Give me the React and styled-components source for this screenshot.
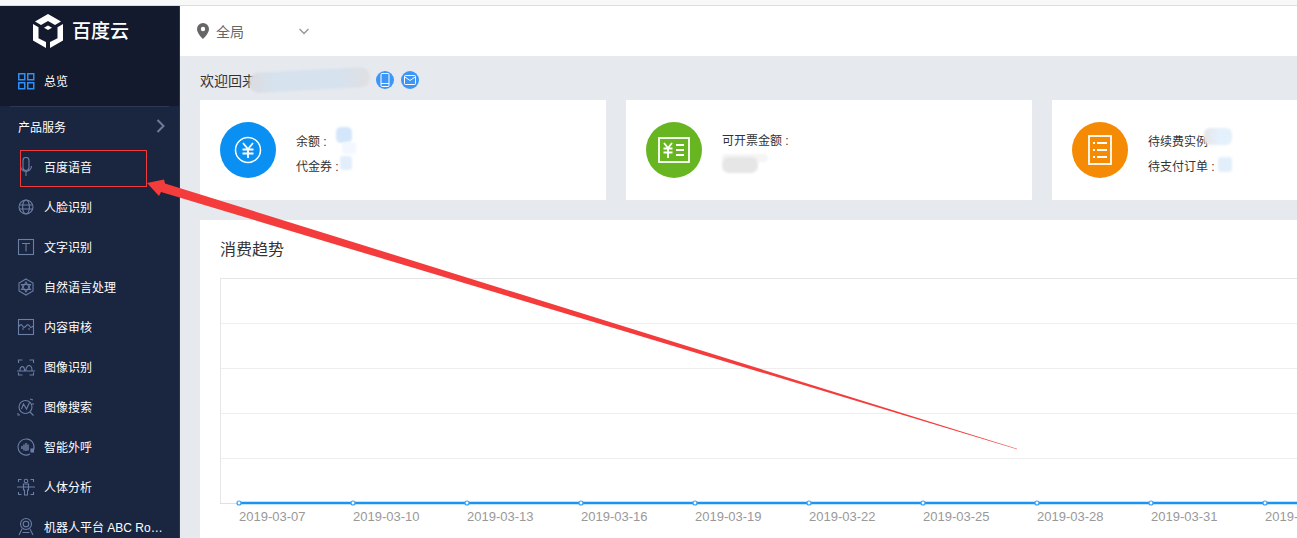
import React from 'react'
import styled, { createGlobalStyle } from 'styled-components'

const GlobalStyle = createGlobalStyle`
  html, body {
    margin: 0;
    height: 100%;
    overflow: hidden;
    background: #fff;
    font-family: "Liberation Sans", "Noto Sans CJK SC", sans-serif;
  }
  * { box-sizing: border-box; }
`

const Page = styled.div`
  position: relative;
  width: 1297px;
  height: 538px;
  overflow: hidden;
  display: flex;
  flex-direction: column;
`
const TopStrip = styled.div`
  height: 6px;
  flex: none;
  background: #f8f8f8;
  border-bottom: 1px solid #dcdcdc;
`
const Body = styled.div`
  flex: 1;
  min-height: 0;
  display: flex;
`
const Sidebar = styled.aside`
  width: 180px;
  flex: none;
  background: #1a2540;
  border-right: 1px solid #2b344d;
`
const SideTop = styled.div`
  height: 100px;
  background: #141a2e;
`
const Logo = styled.div`
  height: 50px;
  margin-bottom: 5px;
  display: flex;
  align-items: center;
  gap: 9px;
  padding-left: 33px;
  color: #fff;
  font-size: 19px;
  font-weight: 500;
`
const LogoText = styled.span`
  padding-bottom: 3px;
`
const Divider = styled.div`
  height: 1px;
  margin: 0 10px;
  background: #2e3852;
`
const NavRow = styled.div`
  height: 40px;
  display: flex;
  align-items: center;
  gap: 8px;
  padding: 0 16px;
  color: #fff;
  font-size: 12px;
  svg { flex: none; }
`
const NavLabel = styled.span`
  padding-bottom: 2px;
  white-space: nowrap;
  overflow: hidden;
  text-overflow: ellipsis;
`
const SectionRow = styled.div`
  height: 40px;
  display: flex;
  align-items: center;
  justify-content: space-between;
  padding: 0 14px 2px 18px;
  color: #fff;
  font-size: 12px;
`
const Main = styled.main`
  flex: 1;
  min-width: 0;
  background: #e6e9ee;
`
const Header = styled.header`
  height: 50px;
  display: flex;
  align-items: center;
  background: #fff;
  padding-left: 17px;
  color: #666;
  font-size: 14px;
`
const RegionName = styled.span`
  width: 83px;
  margin-left: 7px;
`
const Content = styled.div`
  padding-left: 20px;
`
const Welcome = styled.div`
  position: relative;
  height: 44px;
  display: flex;
  align-items: center;
  padding-top: 3px;
  color: #333;
  font-size: 14px;
`
const Badges = styled.div`
  display: flex;
  gap: 7px;
  margin-top: 1px;
  margin-left: 120px;
`
const Badge = styled.span`
  width: 18px;
  height: 18px;
  border-radius: 50%;
  background: #3d95f5;
  display: flex;
  align-items: center;
  justify-content: center;
`
const Cards = styled.div`
  display: grid;
  grid-template-columns: repeat(3, 406px);
  gap: 20px;
`
const Card = styled.section`
  height: 100px;
  display: flex;
  align-items: center;
  gap: 20px;
  padding-left: 20px;
  background: #fff;
`
const Disc = styled.div`
  width: 56px;
  height: 56px;
  border-radius: 50%;
  flex: none;
  background: ${(p) => p.$color};
  display: flex;
  align-items: center;
  justify-content: center;
`
const Lines = styled.div`
  position: relative;
  margin-top: ${(p) => p.$top || 10}px;
  color: #333;
  font-size: 12px;
  line-height: 25px;
`
const Smudge = styled.i`
  position: absolute;
  left: ${(p) => p.$x}px;
  top: ${(p) => p.$y}px;
  width: ${(p) => p.$w}px;
  height: ${(p) => p.$h}px;
  background: ${(p) => p.$bg};
  border-radius: ${(p) => p.$r || 3}px;
  transform: rotate(${(p) => p.$tilt || 0}deg);
  filter: blur(1px);
`
const ChartCard = styled.section`
  width: 1238px;
  height: 320px;
  margin-top: 20px;
  background: #fff;
  padding: 0 0 0 20px;
`
const ChartTitle = styled.h3`
  margin: 0;
  height: 58px;
  line-height: 59px;
  color: #333;
  font-size: 16px;
  font-weight: 400;
`
const Overlay = styled.svg`
  position: absolute;
  left: 0;
  top: 0;
  pointer-events: none;
`
const Marker = styled.div`
  position: absolute;
  left: 20px;
  top: 150px;
  width: 127px;
  height: 37px;
  border: 1px solid #f33a3a;
`

const stroke = '#6b7ea4'

const Glyph = ({ children }) => (
  <svg width="20" height="20" viewBox="0 0 20 20" fill="none" stroke={stroke} strokeWidth="1.1">
    {children}
  </svg>
)

const navItems = [
  ['百度语音', <Glyph><rect x="7" y="0.5" width="6" height="13" rx="3" /><path d="M4.5 9a5.5 5.5 0 0 0 11 0M10 14.5V19" /></Glyph>],
  ['人脸识别', <Glyph><circle cx="10" cy="10" r="7" /><ellipse cx="10" cy="10" rx="3.4" ry="7" /><path d="M3 8h14M3.300 12h13.400" /></Glyph>],
  ['文字识别', <Glyph><rect x="2.5" y="2.5" width="15" height="15" /><path d="M6 6.500h8M10 6.500v8" /></Glyph>],
  ['自然语言处理', <Glyph><path d="M10 2l7 4v8l-7 4-7-4V6z" /><path d="M10 5l4.500 7.500h-9zM10 15l-4.500-7.500h9z" /></Glyph>],
  ['内容审核', <Glyph><rect x="2.5" y="2.5" width="15" height="15" /><path d="M2.500 10c2-3 3-3 4 -1s2 1.500 3 .5 2.500-3 4-.5 2 1 4 0M6 12h2M12 12h2" /></Glyph>],
  ['图像识别', <Glyph><path d="M2.500 6V3h4M13.500 3h4v3M2.500 15.500v2.500h4M13.500 18h4v-2.500M1 14h18M4 13.500c0-5 4-5 4.500-1 .5 2 1 1 1.500 0 1-6 6-5 6 1" /></Glyph>],
  ['图像搜索', <Glyph><circle cx="9.500" cy="10" r="6.500" /><path d="M14 15l3.500 3.500M5.500 12l2-5 3 5 3-6.500M14 2l3 1M17 6v2M2 16v2h2" /></Glyph>],
  ['智能外呼', <Glyph><path d="M17 14a8 8 0 1 0-3 3" /><path d="M6 9v3M8 7.500v6M10 6v8M12 7.500v6" strokeWidth="1.500" /><rect x="15" y="12" width="2.500" height="3" fill={stroke} /></Glyph>],
  ['人体分析', <Glyph><path d="M2.500 5V2.500h3M14.500 2.500h3V5M2.500 15v2.500h3M14.500 17.500h3V15M1 10h18" /><circle cx="10" cy="4" r="1.800" /><path d="M7.500 7h5v6h-1v5h-3v-5h-1z" /></Glyph>],
]

const dates = ['2019-03-07', '2019-03-10', '2019-03-13', '2019-03-16', '2019-03-19', '2019-03-22', '2019-03-25', '2019-03-28', '2019-03-31', '2019-04-03']

function Trend() {
  const grid = [45, 90, 135, 180]
  return (
    <svg width="1077" height="260" viewBox="0 0 1077 260">
      <path d="M0.500 0.500H1077M0.500 0V225" stroke="#e6e6e6" fill="none" />
      {grid.map((y) => (
        <path key={y} d={`M1 ${y + 0.5}H1077`} stroke="#eeeeee" />
      ))}
      <path d="M0 225.500H19" stroke="#e0e0e0" />
      <path d="M19 225H1077" stroke="#1a94f2" strokeWidth="2.400" />
      {dates.map((d, i) => (
        <g key={d}>
          <circle cx={19 + i * 114} cy="225" r="2" fill="#fff" stroke="#3aa0f5" strokeWidth="1.200" />
          <text x={19 + i * 114} y="243" fill="#999" fontSize="13" fontFamily="Liberation Sans, sans-serif">{d}</text>
        </g>
      ))}
    </svg>
  )
}

export default function App() {
  return (
    <Page>
      <GlobalStyle />
      <TopStrip />
      <Body>
        <Sidebar>
          <SideTop>
            <Logo>
              <svg width="30" height="34" viewBox="0 0 30 34" fill="#fff">
                <path d="M15 0l13 7.500-6 3.500-7-4-7 4-6-3.500z" />
                <path d="M0 10l5.500 3.200v11L13 28v6L0 26.500zM30 10l-5.500 3.200v11L17 28v6l13-7.500z" />
                <path d="M15 11.500l4 2.300-4 2.300-4-2.300z" />
              </svg>
              <LogoText>百度云</LogoText>
            </Logo>
            <NavRow>
              <svg width="20" height="20" viewBox="0 0 20 20" fill="none" stroke="#2f8ff5" strokeWidth="1.500">
                <rect x="2.750" y="2.750" width="6" height="6" />
                <rect x="11.750" y="2.750" width="6" height="6" />
                <rect x="2.750" y="11.750" width="6" height="6" />
                <rect x="11.750" y="11.750" width="6" height="6" />
              </svg>
              <NavLabel>总览</NavLabel>
            </NavRow>
          </SideTop>
          <Divider />
          <SectionRow>
            产品服务
            <svg width="9" height="14" viewBox="0 0 9 14" fill="none" stroke="#6d7c9c" strokeWidth="2">
              <path d="M1.500 1l6 6-6 6" />
            </svg>
          </SectionRow>
          {navItems.map(([label, icon]) => (
            <NavRow key={label}>
              {icon}
              <NavLabel>{label}</NavLabel>
            </NavRow>
          ))}
          <NavRow>
            <Glyph>
              <circle cx="10" cy="7" r="5.500" />
              <circle cx="10" cy="7" r="2.800" />
              <path d="M6 12l-3 6M14 12l3 6M6.500 15.500h7" />
            </Glyph>
            <NavLabel>机器人平台 ABC Robot</NavLabel>
          </NavRow>
        </Sidebar>
        <Main>
          <Header>
            <svg width="12" height="16" viewBox="0 0 12 16">
              <path fill="#666" fillRule="evenodd" d="M6 0a6 6 0 0 1 6 6c0 3.500-3.500 7.500-6 10C3.500 13.500 0 9.500 0 6a6 6 0 0 1 6-6zm0 3.800a2.200 2.200 0 1 0 0 4.400 2.200 2.200 0 0 0 0-4.400z" />
            </svg>
            <RegionName>全局</RegionName>
            <svg width="10" height="7" viewBox="0 0 10 7" fill="none" stroke="#999" strokeWidth="1.500">
              <path d="M0.500 1l4.500 4.500L9.500 1" />
            </svg>
          </Header>
          <Content>
            <Welcome>
              欢迎回来
              <Smudge $x={49} $y={14} $w={121} $h={20} $r={9} $tilt={-3} $bg="linear-gradient(90deg,#dcdcde 0,#d6e2ee 20%,#d6e2ee 75%,#e0e0e2 100%)" />
              <Badges>
                <Badge>
                  <svg width="10" height="14" viewBox="0 0 10 14" fill="none" stroke="#fff">
                    <rect x="1" y="0.500" width="8" height="13" rx="1" />
                    <path d="M1 10.500h8" />
                  </svg>
                </Badge>
                <Badge>
                  <svg width="12" height="10" viewBox="0 0 12 10" fill="none" stroke="#fff">
                    <rect x="0.500" y="0.500" width="11" height="9" rx="1" />
                    <path d="M1 2l5 3.500L11 2" />
                  </svg>
                </Badge>
              </Badges>
            </Welcome>
            <Cards>
              <Card>
                <Disc $color="#0a90f2">
                  <svg width="28" height="28" viewBox="0 0 28 28" fill="none" stroke="#fff">
                    <circle cx="14" cy="14" r="12.500" strokeWidth="1.500" />
                    <path d="M9 7l5 6 5-6M8.500 13.500h11M8.500 17.500h11M14 13v9" strokeWidth="1.800" />
                  </svg>
                </Disc>
                <Lines>
                  <div>余额 :</div>
                  <div>代金券 :</div>
                  <Smudge $x={40} $y={-3} $w={16} $h={16} $r={5} $bg="#d4e6fa" />
                  <Smudge $x={46} $y={12} $w={14} $h={12} $bg="#f3f8fe" />
                  <Smudge $x={44} $y={26} $w={12} $h={14} $bg="#e2eefb" />
                </Lines>
              </Card>
              <Card>
                <Disc $color="#67b521">
                  <svg width="32" height="26" viewBox="0 0 32 26" fill="none" stroke="#fff" strokeWidth="1.800">
                    <rect x="1" y="1" width="30" height="24" />
                    <path d="M6 6l4 5 4-5M5.500 11.500h9M5.500 15.500h9M10 11v10" />
                    <path d="M18 8h8M18 13h8M18 18h8" strokeWidth="2" />
                  </svg>
                </Disc>
                <Lines $top={7}>
                  <div>可开票金额 :</div>
                  <div>&nbsp;</div>
                  <Smudge $x={0} $y={25} $w={46} $h={8} $r={4} $bg="#f5f5f5" />
                  <Smudge $x={0} $y={28} $w={36} $h={16} $r={7} $bg="#e6e6e6" />
                </Lines>
              </Card>
              <Card>
                <Disc $color="#f58a05">
                  <svg width="24" height="30" viewBox="0 0 24 30" fill="none" stroke="#fff" strokeWidth="1.800">
                    <rect x="1" y="1" width="22" height="28" />
                    <path d="M5 8h2M9 8h10M5 15h2M9 15h10M5 22h2M9 22h10" strokeWidth="2" />
                  </svg>
                </Disc>
                <Lines>
                  <div>待续费实例</div>
                  <div>待支付订单 :</div>
                  <Smudge $x={56} $y={-2} $w={28} $h={17} $r={6} $bg="linear-gradient(90deg,#e6e6e6,#e4f0fb 50%)" />
                  <Smudge $x={70} $y={27} $w={14} $h={15} $bg="#e2effb" />
                </Lines>
              </Card>
            </Cards>
            <ChartCard>
              <ChartTitle>消费趋势</ChartTitle>
              <Trend />
            </ChartCard>
          </Content>
        </Main>
      </Body>
      <Marker />
      <Overlay width="1297" height="538" viewBox="0 0 1297 538">
        <path fill="#f43c3c" d="M147 183L164 179.500L165 183.500L1017 448.800L1017 449.200L161 192L159 196z" />
      </Overlay>
    </Page>
  )
}
